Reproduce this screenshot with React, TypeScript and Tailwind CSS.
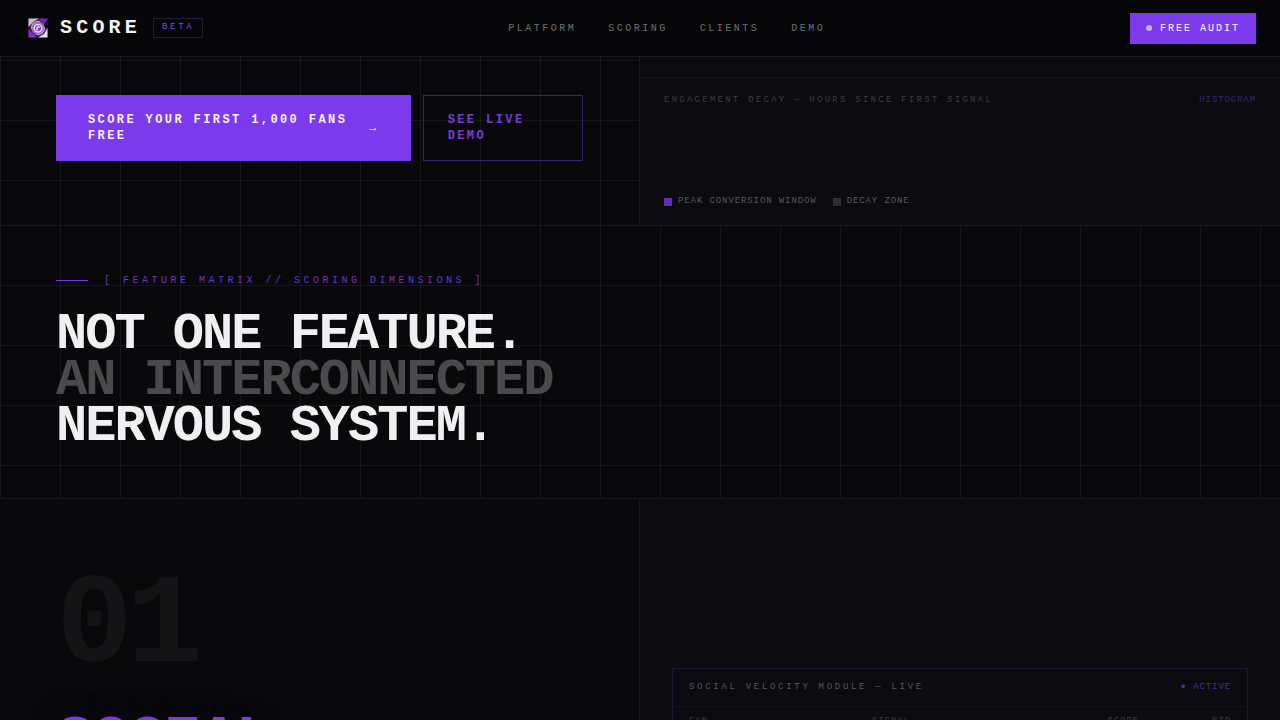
const navLinks = ['PLATFORM', 'SCORING', 'CLIENTS', 'DEMO'];

const gridLines =
  'bg-[linear-gradient(to_right,rgba(255,255,255,0.06)_1px,transparent_1px),linear-gradient(to_bottom,rgba(255,255,255,0.06)_1px,transparent_1px)] bg-[length:60px_60px]';

function Logo() {
  return (
    <svg viewBox="0 0 20 20" className="size-5" aria-hidden="true">
      <rect x="0.5" y="0.5" width="19" height="19" fill="#3d1560" />
      <path d="M0.5 0.5H11L5 4L0.5 9Z" fill="#c9c3bd" />
      <path d="M19.5 19.5H10L16 16L19.5 10Z" fill="#e4dfe2" />
      <path d="M10 0.5H19.5L17 6L13 3Z" fill="#7c22b8" />
      <path d="M0.5 11L3 14L7 17L8 19.5H0.5Z" fill="#8a2bc4" />
      <path d="M19.5 2V10L17 9L16 6Z" fill="#0d0612" />
      <circle cx="10" cy="10" r="6.8" fill="#8f6ab0" />
      <path d="M3.6 11A6.5 6.5 0 0 1 12 3.8M16.4 9A6.5 6.5 0 0 1 8 16.2" fill="none" stroke="#b79ccc" strokeWidth="1.2" />
      <circle cx="10" cy="10.2" r="3.8" fill="#8240c0" stroke="#ead9f5" strokeWidth="1.5" />
      <path d="M9 12.5V9.8A1.4 1.4 0 0 1 11.6 9.6" fill="none" stroke="#fff" strokeWidth="1.2" />
    </svg>
  );
}

function Nav() {
  return (
    <header className="flex h-[57px] items-center justify-between border-b border-[#1b1926] bg-[#070709] pr-6 pl-7">
      <div className="flex items-center">
        <a href="#top" className="flex items-center gap-3">
          <Logo />
          <span className="text-[20px] leading-6 font-bold tracking-[0.21em] text-[#f4f4f5]">SCORE</span>
        </a>
        <span className="ml-3 border border-[#231a3d] px-2 pt-[3px] pb-[5px] text-[9px] leading-[10px] tracking-[0.3em] text-[#7c4bd0]">
          BETA
        </span>
      </div>
      <nav className="flex gap-8">
        {navLinks.map((label) => (
          <a key={label} href={`#${label.toLowerCase()}`} className="text-[10px] leading-[15px] tracking-[0.25em] text-[#6f6f72]">
            {label}
          </a>
        ))}
      </nav>
      <button className="flex items-center gap-2 bg-[#7c3aed] px-4 py-2 text-[10px] leading-[15px] tracking-[0.2em] text-white">
        <span className="size-1.5 rounded-full bg-[#c9aef8]" />
        FREE AUDIT
      </button>
    </header>
  );
}

function Hero() {
  return (
    <section className={`grid grid-cols-2 border-b border-[#19191b] bg-[position:0_3px] ${gridLines}`}>
      <div className="border-r border-[#19191b] px-14 pt-[38px] pb-16">
        <div className="flex gap-3">
          <button className="flex items-center gap-3 bg-[#7c3aed] px-8 py-4 text-left text-[12px] leading-4 font-bold tracking-[0.2em] text-[#f7f0ff]">
            <span>SCORE YOUR FIRST 1,000 FANS FREE</span>
            <span>→</span>
          </button>
          <button className="border border-[#35266b] px-6 py-4 text-left text-[12px] leading-4 font-bold tracking-[0.2em] text-[#7240cf]">
            SEE LIVE DEMO
          </button>
        </div>
      </div>
      <div className="bg-[#0c0b10] pt-5">
        <div className="flex h-full flex-col justify-between border-t border-[#151419] px-6 pt-[15px] pb-[19px] text-[9px]">
          <div className="flex justify-between leading-[14px]">
            <h2 className="tracking-[0.25em] text-[#3d3d41]">ENGAGEMENT DECAY — HOURS SINCE FIRST SIGNAL</h2>
            <span className="tracking-[0.1em] text-[#3b2470]">HISTOGRAM</span>
          </div>
          <ul className="flex gap-4 leading-[10px] tracking-[0.1em] text-[#58585c]">
            <li className="flex items-end gap-1.5">
              <span className="size-2 bg-[#5f2fb5]" />
              <span>PEAK CONVERSION WINDOW</span>
            </li>
            <li className="flex items-end gap-1.5">
              <span className="size-2 bg-[#2f2f33]" />
              <span>DECAY ZONE</span>
            </li>
          </ul>
        </div>
      </div>
    </section>
  );
}

function FeatureIntro() {
  return (
    <section className={`border-b border-[#19191b] bg-[position:0_-1px] px-14 py-12 ${gridLines}`}>
      <div className="flex items-center gap-4">
        <span className="h-px w-8 bg-[#7c3aed]" />
        <p className="text-[10px] leading-[13px] tracking-[0.35em] text-[#6638c0]">
          [ FEATURE MATRIX // SCORING DIMENSIONS ]
        </p>
      </div>
      <h2 className="mt-[25px] text-[52px] leading-[46px] font-bold tracking-[-2px] text-[#f0f0f2]">
        NOT ONE FEATURE.
        <br />
        <span className="text-[#4a4a4d]">AN INTERCONNECTED</span>
        <br />
        NERVOUS SYSTEM.
      </h2>
    </section>
  );
}

function SocialModule() {
  return (
    <section className="grid grid-cols-2">
      <div className="border-r border-[#19191b] px-14 pt-16">
        <p className="text-[128px] leading-[128px] font-bold tracking-[-0.05em] text-[#141416]">01</p>
        <h3 className="mt-5 text-[64px] leading-[64px] font-bold tracking-[-0.04em] text-[#7c3aed] [text-shadow:0_0_40px_rgba(60,20,140,0.12)]">
          SOCIAL
        </h3>
      </div>
      <div className="bg-[#0c0b10] px-8 pt-[169px]">
        <div className="border border-[#1b1730] text-[9px] leading-[14px]">
          <div className="flex justify-between px-4 pt-[11px] pb-3">
            <h4 className="tracking-[0.3em] text-[#58585c]">SOCIAL VELOCITY MODULE — LIVE</h4>
            <span className="tracking-[0.1em] text-[#4b2d92]">● ACTIVE</span>
          </div>
          <table className="w-full table-fixed border-t border-[#121117] tracking-[0.1em] text-[#3d3d41]">
            <thead>
              <tr>
                <th className="w-[199px] pt-[7px] pl-4 text-left font-normal">FAN</th>
                <th className="pt-[7px] text-left font-normal">SIGNAL</th>
                <th className="w-20 pt-[7px] text-right font-normal">SCORE</th>
                <th className="w-[108px] pt-[7px] pr-4 text-right font-normal">BID</th>
              </tr>
            </thead>
          </table>
        </div>
      </div>
    </section>
  );
}

export default function App() {
  return (
    <div id="top" className="h-screen overflow-hidden bg-[#09090b] font-['Liberation_Mono',monospace]">
      <Nav />
      <main>
        <Hero />
        <FeatureIntro />
        <SocialModule />
      </main>
    </div>
  );
}
